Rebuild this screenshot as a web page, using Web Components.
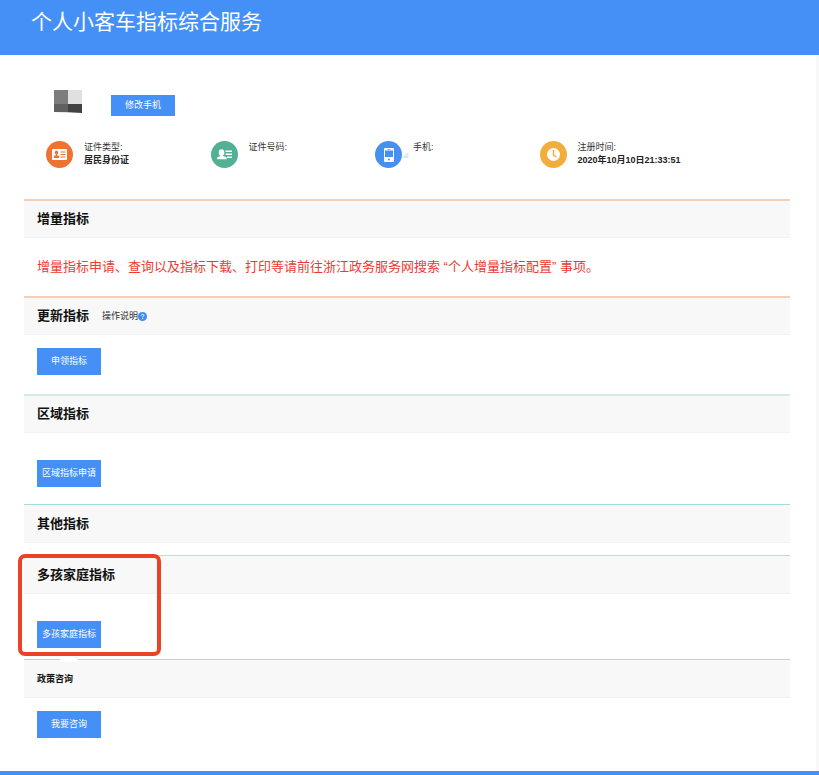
<!DOCTYPE html>
<html lang="zh-CN">
<head>
<meta charset="utf-8">
<title>个人小客车指标综合服务</title>
<style>
  body {
    margin: 0;
    background: #f8f8f8;
    color: #333;
    font: 9px/13px "Liberation Sans", "Noto Sans CJK SC", sans-serif;
  }
</style>
</head>
<body>
<quota-page heading="个人小客车指标综合服务">
  <user-bar>
    <action-button size="small">修改手机</action-button>
  </user-bar>
  <info-list>
    <info-item icon="card" color="#ee7330" label="证件类型:">居民身份证</info-item>
    <info-item icon="person" color="#52b095" label="证件号码:"></info-item>
    <info-item icon="phone" color="#4592ee" label="手机:"></info-item>
    <info-item icon="clock" color="#f3ad3d" label="注册时间:">2020年10月10日21:33:51</info-item>
  </info-list>
  <quota-section heading="增量指标" line="#f5cfb5" body="notice">
    增量指标申请、查询以及指标下载、打印等请前往浙江政务服务网搜索 “个人增量指标配置” 事项。
  </quota-section>
  <quota-section heading="更新指标" line="#f5cfb5" body="near">
    <help-link slot="extra">操作说明</help-link>
    <action-button>申领指标</action-button>
  </quota-section>
  <quota-section heading="区域指标" line="#d3ebe1" body="far">
    <action-button>区域指标申请</action-button>
  </quota-section>
  <quota-section heading="其他指标" line="#a0e0dc" body="empty" thin></quota-section>
  <quota-section heading="多孩家庭指标" line="#c5d5ef" body="tall" thin marked>
    <action-button>多孩家庭指标</action-button>
  </quota-section>
  <quota-section heading="政策咨询" line="#d3c2f3" body="last" thin minor smudge>
    <action-button>我要咨询</action-button>
  </quota-section>
</quota-page>

<script>
// quota-page - header bar, white sheet and footer bar
class QuotaPage extends HTMLElement {
  constructor() {
    super();
    this.attachShadow({ mode: 'open' });
  }

  connectedCallback() {
    this.shadowRoot.innerHTML = `
      <style>
        :host {
          display: flex;
          flex-direction: column;
          min-height: 100vh;
        }
        header {
          background: #4490f7;
          padding: 6px 31px 17px;
        }
        h1 {
          margin: 0;
          color: #fff;
          font-size: 21px;
          font-weight: 400;
          line-height: 32px;
        }
        main {
          flex: 1;
          margin-right: 3px;
          padding: 35px 26px 0 24px;
          background: #fff;
        }
        footer {
          height: 4px;
          background: #4490f7;
        }
      </style>
      <header><h1>${this.getAttribute('heading')}</h1></header>
      <main><slot></slot></main>
      <footer></footer>
    `;
  }
}

// user-bar - masked user name with its action
class UserBar extends HTMLElement {
  constructor() {
    super();
    this.attachShadow({ mode: 'open' });
    this.shadowRoot.innerHTML = `
      <style>
        :host {
          display: flex;
          align-items: flex-start;
          gap: 29px;
          padding-left: 30px;
        }
        svg { display: block; }
        .action { padding-top: 5px; }
      </style>
      <svg width="28" height="23" viewBox="0 0 28 23" aria-hidden="true">
        <path fill="#7d7d7d" d="M0 0h14v14H0z"/>
        <path fill="#e0e0e0" d="M14 0h14v14H14z"/>
        <path fill="#606060" d="M0 14h14v8.300L0 22z"/>
        <path fill="#424242" d="M14 14h14v9l-14-.7z"/>
      </svg>
      <div class="action"><slot></slot></div>
    `;
  }
}

// action-button - flat blue button
class ActionButton extends HTMLElement {
  constructor() {
    super();
    this.attachShadow({ mode: 'open' });
    this.shadowRoot.innerHTML = `
      <style>
        :host { display: block; }
        button {
          display: block;
          min-width: 64px;
          height: 27px;
          margin: 0;
          padding: 0 4px;
          border: 0;
          background: #4490f7;
          color: #fff;
          font: inherit;
          cursor: pointer;
        }
        :host([size="small"]) button { height: 21px; }
      </style>
      <button type="button"><slot></slot></button>
    `;
  }
}

class InfoList extends HTMLElement {
  constructor() {
    super();
    this.attachShadow({ mode: 'open' });
    this.shadowRoot.innerHTML = `
      <style>
        :host {
          display: grid;
          grid-template-columns: repeat(4, 1fr);
          padding: 25px 86px 31px 22px;
        }
      </style>
      <slot></slot>
    `;
  }
}

// glyphs drawn on a 27x27 disc
const ICONS = {
  card: `
    <rect x="6" y="8" width="15" height="11" rx="1" fill="#fff"/>
    <g fill="#ee7330">
      <ellipse cx="10.5" cy="11.5" rx="1.7" ry="2"/>
      <path d="M9.8 13h1.400v1.200l2 .7v2H7.800v-2l2-.7z"/>
      <path d="M14.500 10.500h5v1h-5zM14.500 13h5v1h-5zM14.500 15.500h5v1h-5z"/>
    </g>`,
  person: `
    <g fill="#fff">
      <ellipse cx="10.5" cy="11.500" rx="2.800" ry="3.200"/>
      <path d="M9.200 13h2.600v2l3 1c.8.300 1 1 1 2.200H6c0-1.200.2-1.900 1-2.200l2.200-1z"/>
      <path d="M14.500 9.500h6.500v1.500h-6.500zM14.500 12.500h6.500v1.500h-6.500zM16 15.500h5v1.500h-5z"/>
    </g>`,
  phone: `
    <rect x="9" y="7" width="10" height="14" rx="1" fill="#fff"/>
    <path d="M10 9.500h8v6.500h-8z" fill="#4592ee"/>
    <path d="M12.500 8h3v.6h-3z" fill="#4592ee"/>
    <circle cx="14" cy="18.500" r="1" fill="#4592ee"/>
    <path d="M27 16l6.500-5v6h-6.500z" fill="#d9e9fc"/>`,
  clock: `
    <circle cx="13.500" cy="13.500" r="6.500" fill="#fff"/>
    <path d="M13.500 9v5l3 2" fill="none" stroke="#f3ad3d" stroke-width="1.500"/>`
};

// info-item - round icon, label and value
class InfoItem extends HTMLElement {
  constructor() {
    super();
    this.attachShadow({ mode: 'open' });
  }

  connectedCallback() {
    const color = this.getAttribute('color');

    this.shadowRoot.innerHTML = `
      <style>
        :host {
          display: flex;
          gap: 11px;
        }
        svg {
          flex-shrink: 0;
          overflow: visible;
        }
        dl { margin: 0; }
        dd {
          margin: 0;
          color: #222;
          font-weight: 700;
          white-space: nowrap;
        }
      </style>
      <svg width="27" height="27" viewBox="0 0 27 27" aria-hidden="true">
        <circle cx="13.500" cy="13.500" r="13.500" fill="${color}"/>
        ${ICONS[this.getAttribute('icon')]}
      </svg>
      <dl>
        <dt>${this.getAttribute('label')}</dt>
        <dd><slot></slot></dd>
      </dl>
    `;
  }
}

// help-link - small text link with a question mark badge
class HelpLink extends HTMLElement {
  constructor() {
    super();
    this.attachShadow({ mode: 'open' });
    this.shadowRoot.innerHTML = `
      <style>
        :host { display: block; }
        a {
          display: flex;
          align-items: center;
          color: #333;
          text-decoration: none;
        }
      </style>
      <a href="#"><slot></slot>
        <svg width="9" height="9" viewBox="0 0 9 9" aria-hidden="true">
          <circle cx="4.500" cy="4.500" r="4.500" fill="#3d8df0"/>
          <path d="M3.200 3.500c0-1.700 2.700-1.600 2.700-.1 0 .9-1.300.9-1.300 2M4.600 6.200v1" fill="none" stroke="#fff"/>
        </svg>
      </a>
    `;
  }
}

// quota-section - titled strip with a coloured top line and a body
class QuotaSection extends HTMLElement {
  constructor() {
    super();
    this.attachShadow({ mode: 'open' });
  }

  connectedCallback() {
    this.shadowRoot.innerHTML = `
      <style>
        :host {
          display: block;
          position: relative;
        }
        .head {
          display: flex;
          box-sizing: border-box;
          align-items: center;
          gap: 13px;
          height: 39px;
          padding-left: 13px;
          border-top: 2px solid ${this.getAttribute('line')};
          border-bottom: 1px solid #f2f2f2;
          background: #f8f8f8;
        }
        :host([thin]) .head { border-top-width: 1px; }
        h2 {
          margin: 0;
          color: #111;
          font-size: 13px;
          line-height: 20px;
        }
        :host([minor]) h2 { font-size: 9px; }
        .body { padding: 12px 13px; }
        :host([body="notice"]) .body {
          padding: 19px 13px;
          color: #ee3a32;
          font-size: 13px;
          line-height: 20px;
        }
        :host([body="near"]) .body { padding: 13px 13px 19px; }
        :host([body="far"]) .body { padding: 27px 13px 17px; }
        :host([body="empty"]) .body { padding: 6px 13px; }
        :host([body="tall"]) .body { padding: 27px 13px 11px; }
        :host([body="last"]) .body { padding: 13px 13px 33px; }
        .mark {
          position: absolute;
          top: -1px;
          left: -6px;
          box-sizing: border-box;
          width: 143px;
          height: 102px;
          border: 4px solid #e94226;
          border-radius: 7px;
          pointer-events: none;
        }
        .smudge {
          position: absolute;
          top: 0;
          left: 36px;
          width: 18px;
          height: 3px;
          background: #fff;
        }
      </style>
      <div class="head">
        <h2>${this.getAttribute('heading')}</h2>
        <slot name="extra"></slot>
      </div>
      <div class="body"><slot></slot></div>
      ${this.hasAttribute('marked') ? '<div class="mark"></div>' : ''}
      ${this.hasAttribute('smudge') ? '<div class="smudge"></div>' : ''}
    `;
  }
}

customElements.define('quota-page', QuotaPage);
customElements.define('user-bar', UserBar);
customElements.define('action-button', ActionButton);
customElements.define('info-list', InfoList);
customElements.define('info-item', InfoItem);
customElements.define('help-link', HelpLink);
customElements.define('quota-section', QuotaSection);
</script>
</body>
</html>
